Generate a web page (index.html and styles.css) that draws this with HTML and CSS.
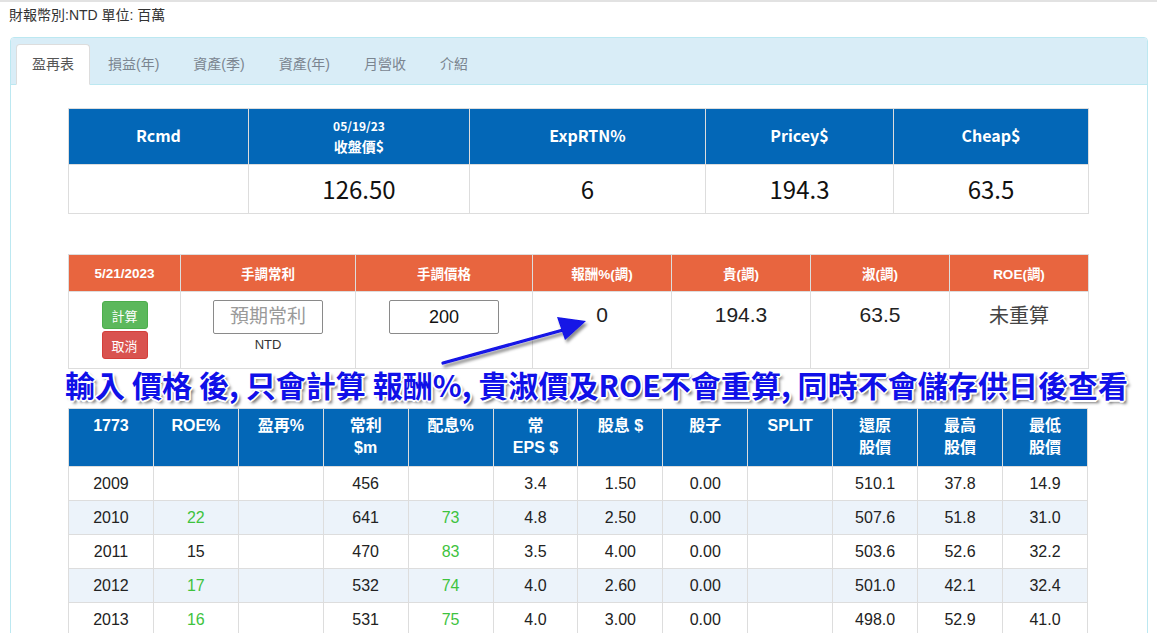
FILE: index.html
```html
<!DOCTYPE html>
<html lang="zh-Hant">
<head>
<meta charset="utf-8">
<title>盈再表</title>
<link rel="stylesheet" href="styles.css">
</head>
<body>
<div class="topline"></div>
<div class="unit">財報幣別:NTD 單位: 百萬</div>
<div class="panel">
  <div class="panel-heading">
    <ul class="tabs">
      <li class="active"><a>盈再表</a></li>
      <li><a>損益(年)</a></li>
      <li><a>資產(季)</a></li>
      <li><a>資產(年)</a></li>
      <li><a>月營收</a></li>
      <li><a>介紹</a></li>
    </ul>
  </div>
  <div class="panel-body">
    <table class="t1">
      <colgroup><col class="w180"><col class="w221"><col class="w236"><col class="w188"><col class="w195"></colgroup>
      <thead>
        <tr>
          <th>Rcmd</th>
          <th><span class="small">05/19/23</span><br><span class="mid">收盤價$</span></th>
          <th>ExpRTN%</th>
          <th>Pricey$</th>
          <th>Cheap$</th>
        </tr>
      </thead>
      <tbody>
        <tr><td></td><td>126.50</td><td>6</td><td>194.3</td><td>63.5</td></tr>
      </tbody>
    </table>

    <table class="t2">
      <colgroup><col class="w112"><col class="w175"><col class="w177"><col class="w139"><col class="w139"><col class="w139"><col class="w139"></colgroup>
      <thead>
        <tr>
          <th>5/21/2023</th><th>手調常利</th><th>手調價格</th><th>報酬%(調)</th><th>貴(調)</th><th>淑(調)</th><th>ROE(調)</th>
        </tr>
      </thead>
      <tbody>
        <tr>
          <td class="btns"><button class="btn ok">計算</button><button class="btn cancel">取消</button></td>
          <td class="inp"><input type="text" placeholder="預期常利"><div class="ntd">NTD</div></td>
          <td class="inp"><input type="text" value="200"></td>
          <td class="val">0</td>
          <td class="val">194.3</td>
          <td class="val">63.5</td>
          <td class="val cjk">未重算</td>
        </tr>
      </tbody>
    </table>

    <table class="t3">
      <thead>
        <tr>
          <th>1773</th><th>ROE%</th><th>盈再%</th><th>常利<br>$m</th><th>配息%</th><th>常<br>EPS $</th>
          <th>股息 $</th><th>股子</th><th>SPLIT</th><th>還原<br>股價</th><th>最高<br>股價</th><th>最低<br>股價</th>
        </tr>
      </thead>
      <tbody>
        <tr><td>2009</td><td></td><td></td><td>456</td><td></td><td>3.4</td><td>1.50</td><td>0.00</td><td></td><td>510.1</td><td>37.8</td><td>14.9</td></tr>
        <tr><td>2010</td><td class="g">22</td><td></td><td>641</td><td class="g">73</td><td>4.8</td><td>2.50</td><td>0.00</td><td></td><td>507.6</td><td>51.8</td><td>31.0</td></tr>
        <tr><td>2011</td><td>15</td><td></td><td>470</td><td class="g">83</td><td>3.5</td><td>4.00</td><td>0.00</td><td></td><td>503.6</td><td>52.6</td><td>32.2</td></tr>
        <tr><td>2012</td><td class="g">17</td><td></td><td>532</td><td class="g">74</td><td>4.0</td><td>2.60</td><td>0.00</td><td></td><td>501.0</td><td>42.1</td><td>32.4</td></tr>
        <tr><td>2013</td><td class="g">16</td><td></td><td>531</td><td class="g">75</td><td>4.0</td><td>3.00</td><td>0.00</td><td></td><td>498.0</td><td>52.9</td><td>41.0</td></tr>
      </tbody>
    </table>
  </div>
</div>

<svg class="arrow" width="1157" height="633" viewBox="0 0 1157 633">
  <defs>
    <filter id="sh" x="-20%" y="-50%" width="140%" height="200%">
      <feDropShadow dx="2" dy="3" stdDeviation="1.6" flood-color="#000" flood-opacity="0.45"/>
    </filter>
  </defs>
  <g filter="url(#sh)">
    <line x1="443" y1="363" x2="563" y2="330" stroke="#1212e6" stroke-width="3.2" stroke-linecap="round"/>
    <polygon points="586,321 565,340 557,317" fill="#1212e6"/>
  </g>
</svg>
<div class="note">輸入 價格 後, 只會計算 報酬%, 貴淑價及ROE不會重算, 同時不會儲存供日後查看</div>
</body>
</html>
```

FILE: styles.css
```css
html, body {
  margin: 0;
  padding: 0;
  background: #fff;
}
body {
  font-family: "Liberation Sans", "Noto Sans CJK TC", Arial, sans-serif;
  color: #333;
  width: 1157px;
  height: 633px;
  overflow: hidden;
  position: relative;
}
.topline {
  height: 2px;
  background: #e2e2e2;
}
.unit {
  padding: 4px 9px 0;
  font-size: 14px;
  line-height: 18px;
  color: #333;
}
.panel {
  margin: 13px 9px 0 10px;
  border: 1px solid #bce8f1;
  border-radius: 4px;
  background: #fff;
  height: 700px;
}
.panel-heading {
  background: #d9edf7;
  border-bottom: 1px solid #bce8f1;
  border-radius: 3px 3px 0 0;
  padding: 6px 5px 0;
}
.tabs {
  display: flex;
  list-style: none;
  margin: 0;
  padding: 0;
}
.tabs li {
  margin-right: 2px;
  margin-bottom: -1px;
  position: relative;
}
.tabs a {
  display: block;
  padding: 9px 15px 10px;
  line-height: 20px;
  font-size: 14px;
  color: #7b8590;
  border: 1px solid transparent;
  border-radius: 4px 4px 0 0;
}
.tabs li.active a {
  background: #fff;
  color: #555;
  border-color: #ddd #ddd transparent #ddd;
}
.panel-body {
  padding-top: 23px;
}
table {
  border-collapse: collapse;
  width: 1020px;
  margin-left: 57px;
  table-layout: fixed;
}
th, td {
  border: 1px solid #ddd;
  text-align: center;
  padding: 0;
}
.w180 { width: 180px; }
.w221 { width: 221px; }
.w236 { width: 236px; }
.w188 { width: 188px; }
.w195 { width: 195px; }
.w112 { width: 112px; }
.w175 { width: 175px; }
.w177 { width: 177px; }
.w139 { width: 139px; }

/* table 1 */
.t1 th {
  background: #0367b7;
  color: #fff;
  height: 51px;
  padding-bottom: 4px;
  font-family: "Noto Sans CJK TC", "Liberation Sans", sans-serif;
  font-size: 16px;
  font-weight: 700;
  line-height: 20px;
  vertical-align: middle;
}
.t1 th .small {
  font-size: 12px;
  line-height: 18px;
}
.t1 th .mid {
  font-size: 14px;
  line-height: 20px;
}
.t1 td {
  height: 46px;
  padding-bottom: 2px;
  font-family: "Noto Sans CJK TC", "Liberation Sans", sans-serif;
  font-size: 24px;
  color: #111;
  vertical-align: middle;
}

/* table 2 */
.t2 {
  margin-top: 40px;
}
.t2 th {
  background: #e8653f;
  color: #fff;
  height: 36px;
  font-size: 13.5px;
  font-weight: 700;
  font-family: "Liberation Sans", "Noto Sans CJK TC", sans-serif;
  vertical-align: middle;
}
.t2 td {
  height: 77px;
  vertical-align: top;
  box-sizing: border-box;
}
.t2 td.btns {
  padding-top: 9px;
}
.btn {
  display: block;
  margin: 0 auto;
  width: 46px;
  height: 28px;
  padding: 0;
  font-family: "Noto Sans CJK TC", sans-serif;
  font-size: 13px;
  color: #fff;
  border-radius: 3px;
  cursor: pointer;
}
.btn.ok {
  background: #5cb85c;
  border: 1px solid #4cae4c;
}
.btn.cancel {
  background: #d9534f;
  border: 1px solid #d43f3a;
  margin-top: 2px;
}
.t2 td.inp {
  padding-top: 8px;
}
.t2 input {
  width: 110px;
  height: 34px;
  box-sizing: border-box;
  border: 1px solid #8a8a8a;
  border-radius: 2px;
  padding: 0 6px;
  text-align: center;
  font-family: "Liberation Sans", "Noto Sans CJK TC", sans-serif;
  font-size: 18px;
  color: #111;
  outline: none;
}
.t2 input::placeholder {
  color: #9a9a9a;
  font-size: 19px;
}
.ntd {
  margin-top: 2px;
  font-size: 13px;
  line-height: 18px;
  color: #333;
}
.t2 td.val {
  padding-top: 8px;
  font-size: 21px;
  line-height: 30px;
  color: #222;
}
.t2 td.cjk {
  font-family: "Noto Sans CJK TC", sans-serif;
  font-size: 20px;
  color: #444;
}

/* table 3 */
.t3 {
  margin-top: 39px;
}
.t3 th {
  background: #0367b7;
  color: #fff;
  font-size: 16px;
  font-weight: 700;
  line-height: 22px;
  padding: 6px 0 6px;
  height: 45px;
  vertical-align: top;
  font-family: "Liberation Sans", "Noto Sans CJK TC", sans-serif;
}
.t3 td {
  height: 34px;
  font-size: 16px;
  color: #222;
  vertical-align: middle;
  box-sizing: border-box;
}
.t3 tbody tr:nth-child(even) td {
  background: #ecf3fa;
}
.t3 td.g {
  color: #3ec33e;
}

/* overlay annotation */
.arrow {
  position: absolute;
  left: 0;
  top: 0;
  pointer-events: none;
}
.note {
  position: absolute;
  left: 65px;
  top: 368px;
  white-space: nowrap;
  font-family: "Noto Sans CJK TC", "Liberation Sans", sans-serif;
  font-weight: 700;
  font-size: 30px;
  line-height: 32px;
  letter-spacing: 0.05px;
  color: #1010e8;
  text-shadow:
    1px 1px 0 #fff, -1px -1px 0 #fff, 1px -1px 0 #fff, -1px 1px 0 #fff,
    2px 0 0 #fff, -2px 0 0 #fff, 0 2px 0 #fff, 0 -2px 0 #fff,
    3px 3px 3px rgba(0,0,0,0.55);
}
```
